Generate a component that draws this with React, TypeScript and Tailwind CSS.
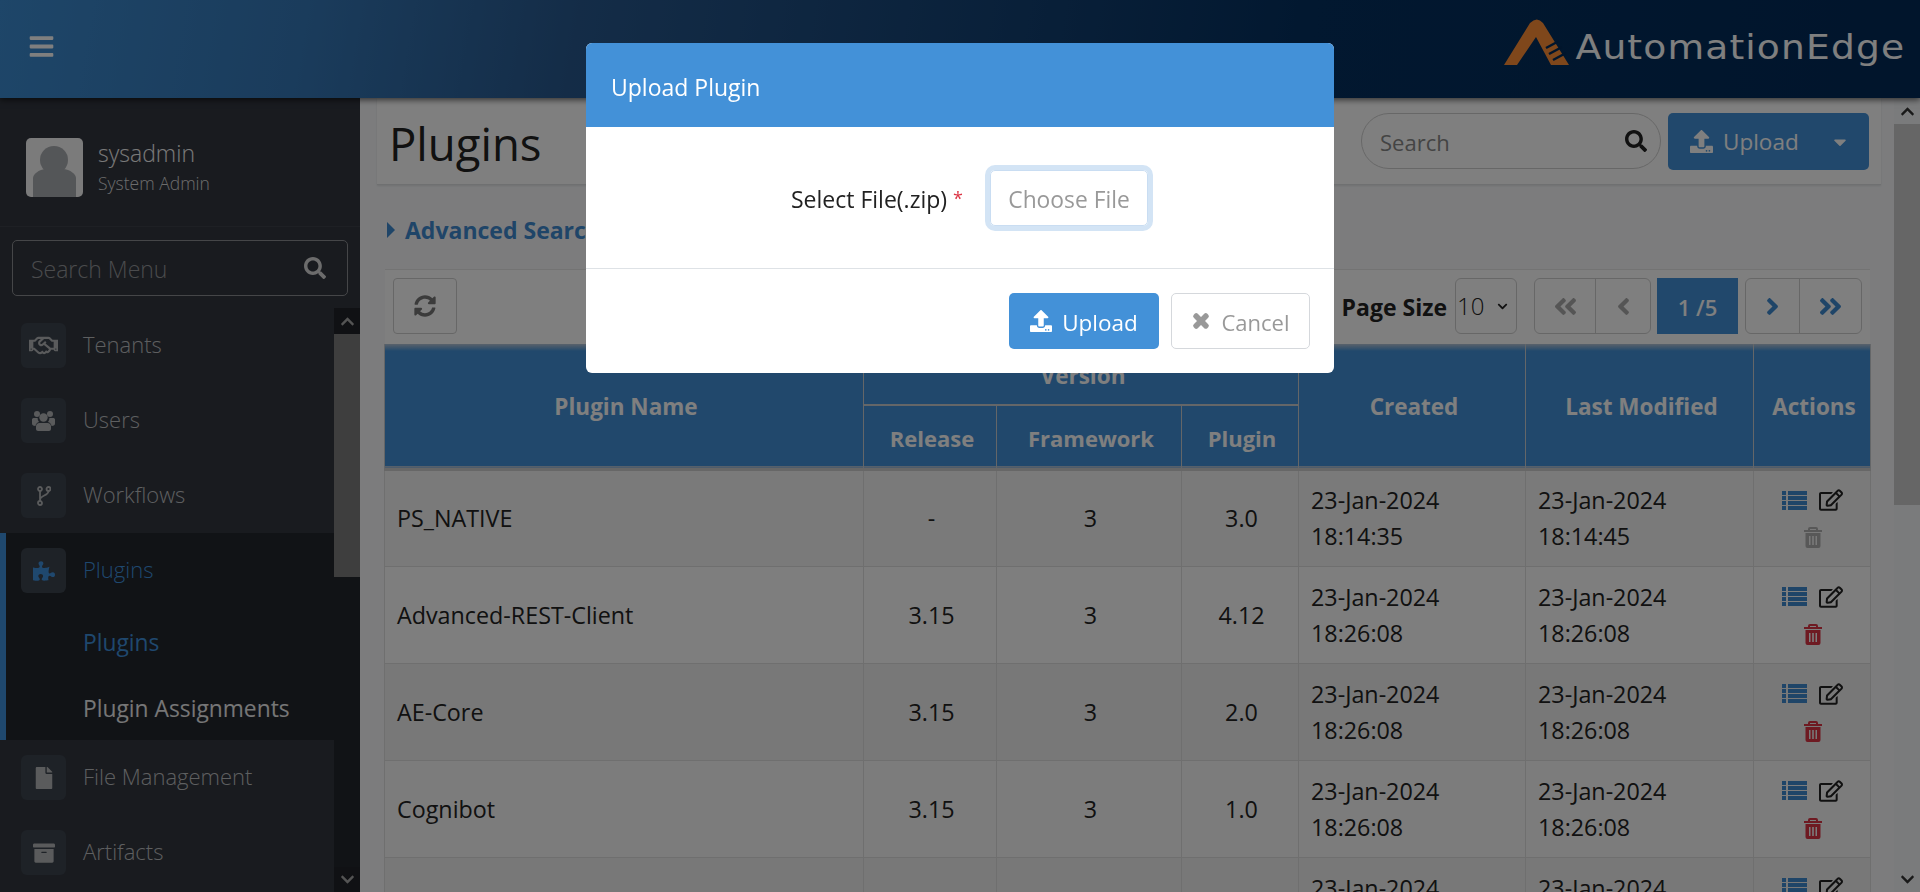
import {
  FaBars, FaSearch, FaUpload, FaCaretDown, FaSyncAlt, FaAngleDoubleLeft, FaAngleLeft,
  FaAngleRight, FaAngleDoubleRight, FaRegEdit, FaTimes, FaRegHandshake,
  FaPuzzlePiece, FaFile, FaArchive, FaChevronUp, FaChevronDown,
} from "react-icons/fa";

const rows = [
  { name: "PS_NATIVE", release: "-", framework: "3", plugin: "3.0", created: "18:14:35", modified: "18:14:45", locked: true },
  { name: "Advanced-REST-Client", release: "3.15", framework: "3", plugin: "4.12", created: "18:26:08", modified: "18:26:08" },
  { name: "AE-Core", release: "3.15", framework: "3", plugin: "2.0", created: "18:26:08", modified: "18:26:08" },
  { name: "Cognibot", release: "3.15", framework: "3", plugin: "1.0", created: "18:26:08", modified: "18:26:08" },
  { name: "", release: "", framework: "", plugin: "", created: "18:26:08", modified: "18:26:08" },
];

const rowBg = ["bg-[#f4f4f4]", "bg-[#fcfcfc]", "bg-[#f0f0f0]", "bg-[#f8f8f8]", "bg-[#f0f0f0]"];

// fa4 style icons the package doesn't carry
function ListIcon() {
  return (
    <svg viewBox="0 0 25 19" className="h-[19px] w-[25px] fill-[#3f8ad0]">
      <path d="M0 0h4v4H0zM6 0h19v4H6zM0 5h4v4H0zM6 5h19v4H6zM0 10h4v4H0zM6 10h19v4H6zM0 15h4v4H0zM6 15h19v4H6z" />
    </svg>
  );
}

function TrashIcon({ className }: { className: string }) {
  return (
    <svg viewBox="0 0 18 21" className={`h-[21px] w-[18px] ${className}`}>
      <path fillRule="evenodd" d="M6 0h6a2 2 0 0 1 2 2v1h4v2H0V3h4V2a2 2 0 0 1 2-2zM6 2v1h6V2zM1.5 6h15v13a2 2 0 0 1-2 2h-11a2 2 0 0 1-2-2zM5 9v9h1.5V9zM8.2 9v9h1.6V9zM11.5 9v9H13V9z" fill="currentColor" />
    </svg>
  );
}

function UsersIcon() {
  return (
    <svg viewBox="0 0 23 21" className="h-[21px] w-[23px] fill-current">
      <circle cx="5" cy="4" r="3" />
      <circle cx="18" cy="4" r="3" />
      <circle cx="11.5" cy="7.5" r="4.2" />
      <path d="M0 9.5c0-1 1-1.5 2-1.5h3.6a6 6 0 0 0 1.4 4c-2 .6-3.2 2-3.5 4C1 15.800 0 15 0 13.500zM23 9.500c0-1-1-1.500-2-1.500h-3.600a6 6 0 0 1-1.400 4c2 .6 3.200 2 3.500 4 2.500-.2 3.500-1 3.500-2.500zM7.500 13h8c2 0 3.500 1.500 3.500 3.500V19c0 1.200-1 2-2 2H6c-1 0-2-.8-2-2v-2.500C4 14.500 5.500 13 7.500 13z" />
    </svg>
  );
}

function ForkIcon() {
  return (
    <svg viewBox="0 0 14 20" className="h-[20px] w-[14px] fill-none stroke-current" strokeWidth="1.8">
      <circle cx="3" cy="3" r="2" />
      <circle cx="3" cy="17" r="2" />
      <circle cx="11.500" cy="3" r="2" />
      <path d="M3 5v10M11.500 5c0 5-8.500 4-8.500 9" />
    </svg>
  );
}

function MenuItem({ icon, label, active }: { icon: React.ReactNode; label: string; active?: boolean }) {
  return (
    <div className="flex h-[75px] shrink-0 items-center pl-[21px]">
      <span className={`flex h-[45px] w-[45px] items-center justify-center rounded-[6px] bg-[#3c444e] text-[22px] ${active ? "text-[#3f90dd]" : "text-[#b4b6b8]"}`}>
        {icon}
      </span>
      <span className={`ml-[17px] -mt-[2px] text-[22px] font-light ${active ? "text-[#3f90dd]" : "text-[#bcbec0]"}`}>{label}</span>
    </div>
  );
}

function Sidebar() {
  return (
    <aside className="flex w-[360px] shrink-0 flex-col bg-[#32363f]">
      <div className="flex h-[129px] shrink-0 items-start border-b border-[#3c4048] pl-[26px] pt-[40px]">
        <div className="flex h-[59px] w-[57px] items-end justify-center overflow-hidden rounded-[5px] bg-[#f6f6f6]">
          <svg viewBox="0 0 57 59" className="h-[59px] w-[57px]">
            <circle cx="28" cy="22" r="14" fill="#a9acb0" />
            <path d="M7 59V40c0-3 5-9 14-9h15c9 0 14 6 14 9v19z" fill="#a9acb0" />
          </svg>
        </div>
        <div className="ml-[15px] flex flex-col">
          <span className="text-[23px] leading-[30px] font-light text-[#f2f2f2]">sysadmin</span>
          <span className="mt-[1px] text-[17.500px] leading-[28px] font-light text-[#d8d8d8]">System Admin</span>
        </div>
      </div>
      <div className="mx-[12px] mt-[13px] flex h-[56px] shrink-0 items-center justify-between rounded-[5px] border border-[#8b8d90] pl-[18px] pr-[21px]">
        <span className="pt-[3px] text-[23px] font-light text-[#94979a]">Search Menu</span>
        <FaSearch className="text-[22px] text-[#d8d8d8]" />
      </div>
      <div className="mt-[12px] flex min-h-0 flex-1">
        <nav className="flex min-w-0 flex-1 flex-col overflow-hidden">
          <MenuItem icon={<FaRegHandshake className="text-[29px]" />} label="Tenants" />
          <MenuItem icon={<UsersIcon />} label="Users" />
          <MenuItem icon={<ForkIcon />} label="Workflows" />
          <div className="h-[207px] shrink-0 overflow-hidden border-l-[6px] border-[#3f90dd] bg-[#22262c] [&>div:first-child]:pl-[15px]">
            <MenuItem icon={<FaPuzzlePiece />} label="Plugins" active />
            <div className="pt-[2px] pl-[77px]">
              <div className="flex h-[66px] items-center text-[22.800px] text-[#3f90dd]">Plugins</div>
              <div className="flex h-[66px] items-center text-[22.800px] text-[#ececec]">Plugin Assignments</div>
            </div>
          </div>
          <MenuItem icon={<FaFile />} label="File Management" />
          <MenuItem icon={<FaArchive />} label="Artifacts" />
        </nav>
        <div className="flex w-[26px] shrink-0 flex-col bg-[#22262c]">
          <div className="flex h-[26px] items-center justify-center bg-[#202228] text-[15px] text-[#a8a8a8]"><FaChevronUp /></div>
          <div className="h-[243px] bg-[#7c7c7c]" />
          <div className="mt-auto flex h-[25px] items-center justify-center bg-[#202228] text-[15px] text-[#a8a8a8]"><FaChevronDown /></div>
        </div>
      </div>
    </aside>
  );
}

function PageButton({ children, className }: { children: React.ReactNode; className?: string }) {
  return <span className={`flex h-full items-center justify-center text-[27px] ${className}`}>{children}</span>;
}

function Toolbar() {
  return (
    <div className="ml-[8px] mr-[11px] flex h-[75px] shrink-0 items-start border-t border-[#e6e6e6] bg-[#ffffff] pl-[8px] pr-[8px] pt-[8px]">
      <span className="flex h-[56px] w-[64px] items-center justify-center rounded-[4px] border border-[#cfcfcf] text-[22px] text-[#777777]">
        <FaSyncAlt />
      </span>
      <span className="ml-auto flex h-[56px] items-center pt-[2px] text-[23px] font-bold text-[#222222]">Page Size</span>
      <span className="ml-[8px] flex h-[56px] w-[62px] items-center justify-between rounded-[6px] border border-[#cfcfcf] pl-[1px] pr-[8px] text-[24px] font-light text-[#222222]">
        10
        <FaChevronDown className="text-[11px]" />
      </span>
      <div className="ml-[17px] flex h-[56px] w-[117px] rounded-[6px] border border-[#cfcfcf] text-[#aaaaaa]">
        <PageButton className="w-[61px] border-r border-[#cfcfcf]"><FaAngleDoubleLeft /></PageButton>
        <PageButton className="flex-1"><FaAngleLeft /></PageButton>
      </div>
      <span className="ml-[6px] flex h-[56px] w-[81px] items-center justify-center bg-[#4391d8] pt-[2px] text-[22px] font-semibold text-[#ffffff]">1 /5</span>
      <div className="ml-[7px] flex h-[56px] w-[117px] rounded-[6px] border border-[#cfcfcf] text-[#3f8ad0]">
        <PageButton className="w-[54px] border-r border-[#cfcfcf]"><FaAngleRight /></PageButton>
        <PageButton className="flex-1"><FaAngleDoubleRight /></PageButton>
      </div>
    </div>
  );
}

function PluginTable() {
  const th = "border-x border-[#c8ccd0] pl-[4px] pt-[3px] font-bold text-[22.500px] text-[#ffffff] text-center align-middle";
  const center = "border border-[#dedede] pl-[3px] text-center";
  return (
    <table className="ml-[7px] w-[1486px] shrink-0 table-fixed border-collapse">
      <colgroup>
        <col className="w-[479px]" />
        <col className="w-[133px]" />
        <col className="w-[185px]" />
        <col className="w-[117px]" />
        <col className="w-[227px]" />
        <col className="w-[228px]" />
        <col className="w-[117px]" />
      </colgroup>
      <thead className="border-b-[3px] border-[#cfcfcf] bg-[linear-gradient(to_bottom,#b4c4d6_0px,#4391d8_7px)]">
        <tr className="h-[61px]">
          <th rowSpan={2} className={th}>Plugin Name</th>
          <th colSpan={3} className={`${th} border-b-2`}>Version</th>
          <th rowSpan={2} className={th}>Created</th>
          <th rowSpan={2} className={th}>Last Modified</th>
          <th rowSpan={2} className={th}>Actions</th>
        </tr>
        <tr className="h-[64px]">
          <th className={`${th} text-[22px]`}>Release</th>
          <th className={`${th} text-[22px]`}>Framework</th>
          <th className={`${th} text-[22px]`}>Plugin</th>
        </tr>
      </thead>
      <tbody>
        {rows.map((row, i) => (
          <tr key={i} className={`h-[97px] ${rowBg[i]} text-[23.300px] leading-[36px] text-[#222222]`}>
            <td className="border border-[#dedede] pl-[12px]">{row.name}</td>
            <td className={center}>{row.release}</td>
            <td className={center}>{row.framework}</td>
            <td className={center}>{row.plugin}</td>
            <td className="border border-[#dedede] pl-[12px]">23-Jan-2024<br />{row.created}</td>
            <td className="border border-[#dedede] pl-[12px]">23-Jan-2024<br />{row.modified}</td>
            <td className="border border-[#dedede] pl-[1px]">
              <div className="flex flex-col items-center gap-[15px]">
                <div className="flex items-center gap-[12px]">
                  <ListIcon />
                  <FaRegEdit className="text-[24px] text-[#222222]" />
                </div>
                <TrashIcon className={row.locked ? "text-[#b0b0b0]" : "text-[#dc3545]"} />
              </div>
            </td>
          </tr>
        ))}
      </tbody>
    </table>
  );
}

function UploadModal() {
  return (
    <div className="fixed inset-0 z-50 flex justify-center bg-black/50 pt-[43px]">
      <div className="h-[330px] w-[748px] overflow-hidden rounded-[6px] bg-white">
        <div className="flex h-[84px] items-center bg-[#4391d8] pl-[25px] pt-[4px] text-[23px] text-white">Upload Plugin</div>
        <div className="flex h-[142px] items-center border-b border-[#dee2e6] pl-[205px] pt-[1px]">
          <span className="w-[199px] pt-[2px] text-[23px] text-[#222222]">
            Select File(.zip) <span className="align-[3px] text-[18px] text-[#dc3545]">*</span>
          </span>
          <span className="flex h-[56px] w-[158px] items-center justify-center rounded-[5px] border border-[#c9ddf2] pt-[4px] text-[22.800px] text-[#999999] shadow-[0_0_0_5px_#d3e4f5]">
            Choose File
          </span>
        </div>
        <div className="flex justify-end gap-[12px] pr-[24px] pt-[24px]">
          <span className="flex h-[56px] w-[150px] items-center justify-center gap-[10px] rounded-[5px] bg-[#4391d8] text-[22.500px] text-white">
            <FaUpload className="text-[22px]" /> <span className="pt-[3px]">Upload</span>
          </span>
          <span className="flex h-[56px] w-[139px] items-center justify-center gap-[10px] rounded-[5px] border border-[#d5d8dc] text-[22px] text-[#999999]">
            <FaTimes className="text-[20px]" stroke="currentColor" strokeWidth={50} /> <span className="pt-[2px]">Cancel</span>
          </span>
        </div>
      </div>
    </div>
  );
}

export default function App() {
  return (
    <div className="flex h-[892px] w-[1920px] flex-col overflow-hidden bg-[#f8f9fb] font-['Open_Sans',sans-serif]">
      {/* Top bar */}
      <header className="relative z-10 flex h-[98px] shrink-0 items-center justify-between bg-[linear-gradient(100deg,#3c8cd2_0%,#3578b8_16%,#28598f_30%,#043060_68%,#022a58_100%)] pl-[28px] pr-[15px] shadow-[0_2px_6px_rgba(0,0,0,0.6)]">
        <FaBars className="-mt-[6px] text-[27px] text-white" />
        <div className="-mt-[14px] flex items-end">
          <svg viewBox="0 0 65 46" className="h-[46px] w-[65px]">
            <path d="M0 46 L26 4 Q33 -3 39 4 L65 46 H47 L32 18 L13 46 Z" fill="#fe8e36" />
            <path d="M42 29 L55 22 M45 35 L58 28 M49 41 L62 34" stroke="#022a58" strokeWidth="2.500" />
          </svg>
          <span className="-mb-[7px] ml-[47px] origin-right scale-x-[1.14] text-[33px] tracking-[1px] text-white font-['DejaVu_Sans',sans-serif]">AutomationEdge</span>
        </div>
      </header>

      <div className="flex min-h-0 flex-1">
        <Sidebar />

        <main className="flex min-w-0 flex-1">
          <div className="flex min-w-0 flex-1 flex-col pl-[17px] pr-[13px]">
            {/* Page title */}
            <div className="flex h-[87px] shrink-0 items-start border-b border-[#dfe1e3] bg-white pl-[12px] pr-[12px] pt-[15px] shadow-[0_1px_2px_rgba(0,0,0,0.1)]">
              <h1 className="-mt-[2px] text-[45.500px] leading-[64px] text-[#222222]">Plugins</h1>
              <div className="ml-auto flex h-[56px] w-[300px] items-center justify-between rounded-full border border-[#cfcfcf] pl-[18px] pr-[13px]">
                <span className="pt-[3px] text-[22px] text-[#888888]">Search</span>
                <FaSearch className="text-[22px] text-[#222222]" />
              </div>
              <div className="ml-[7px] flex h-[57px] w-[201px] items-center rounded-[5px] bg-[#4391d8] pl-[22px] pr-[19px] text-[22.500px] text-white">
                <FaUpload className="text-[23px]" />
                <span className="ml-[10px]">Upload</span>
                <FaCaretDown className="ml-auto text-[20px]" />
              </div>
            </div>

            {/* Advanced search */}
            <div className="flex h-[84px] shrink-0 items-center pl-[10px] pt-[6px] text-[#3f8ad0]">
              <svg viewBox="0 0 8 16" className="h-[16px] w-[8px] fill-current"><path d="M0 0l8 8-8 8z" /></svg>
              <span className="ml-[10px] text-[23px] font-bold">Advanced Search</span>
            </div>

            <Toolbar />
            <PluginTable />
          </div>

          {/* Page scrollbar */}
          <div className="flex w-[26px] shrink-0 flex-col bg-[#f4f6f8]">
            <div className="flex h-[26px] items-center justify-center text-[15px] text-[#333333]"><FaChevronUp /></div>
            <div className="h-[381px] bg-[#cccccc]" />
            <div className="mt-auto flex h-[25px] items-center justify-center text-[15px] text-[#333333]"><FaChevronDown /></div>
          </div>
        </main>
      </div>

      <UploadModal />
    </div>
  );
}
